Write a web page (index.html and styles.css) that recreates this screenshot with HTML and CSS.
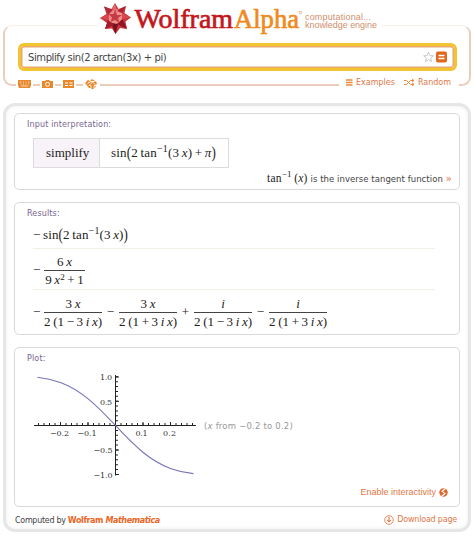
FILE: index.html
```
<!DOCTYPE html>
<html>
<head>
<meta charset="utf-8">
<title>Simplify sin(2 arctan(3x) + pi) - Wolfram|Alpha</title>
<link rel="stylesheet" href="styles.css">
</head>
<body>
<div class="header">
	<a class="logo">
		<svg width="290" height="40" viewBox="0 0 290 40">
			<polygon points="15,2 18.500,8 26,5 24.500,12 31,16.500 25.500,20.500 27,28 20,27 15.500,33 12,27.500 5,28 7,22 0,17 6.500,13 4,5.500 11.500,8" fill="#c8373c" transform="translate(0 1)"/>
			<polygon points="15,8 22,12 22.500,20 16,25 9,21 8,13" fill="#ef8d88"/>
			<polygon points="15,3 17,13 12,9" fill="#e5646a"/>
			<polygon points="26,6 22,13 17,11" fill="#a92331"/>
			<polygon points="31,17.500 22,19 22,13" fill="#d9494f"/>
			<polygon points="27,29 17,24 22.500,19" fill="#8f1524"/>
			<polygon points="15.500,34 11,23 18,24" fill="#79101f"/>
			<polygon points="5,29 8,20 14,25" fill="#a11d2d"/>
			<polygon points="0,18 9,14 9,20" fill="#d94a50"/>
			<polygon points="4,6.500 13,10 8,15" fill="#b22b38"/>
			<polygon points="15,10 17,15 22,15 18,18 19.500,23 15,20 10.500,22 12,17.500 8.500,14 13.500,14" fill="#c63c46"/>
			<text class="wolfram" x="34.500" y="28" textLength="98.500" lengthAdjust="spacingAndGlyphs">Wolfram</text>
			<text class="alpha" x="134" y="28" textLength="65" lengthAdjust="spacingAndGlyphs">Alpha</text>
			<circle cx="200.500" cy="12.500" r="1.300" fill="none" stroke="#e8a070" stroke-width=".8"/>
			<text class="tagline" x="205" y="19.500" textLength="66">computational...</text>
			<text class="tagline" x="205" y="28" textLength="72">knowledge engine</text>
		</svg>
	</a>
	<div class="query">
		<span class="query-text">Simplify sin(2 arctan(3x) + pi)</span>
		<svg width="25" height="12" viewBox="0 0 25 12">
			<path d="M5.500 1.200L6.900 4.600L10.400 4.800L7.700 7.100L8.600 10.600L5.500 8.700L2.400 10.600L3.300 7.100L.6 4.800L4.100 4.600Z" fill="#fff" stroke="#bbb" stroke-width=".8"/>
			<rect x="13" y="0.500" width="11" height="11" rx="2" fill="#e0661a"/>
			<path d="M15.500 4.500h6M15.500 7.500h6" stroke="#fff" stroke-width="1.500"/>
		</svg>
	</div>
	<div class="tools">
		<svg width="13" height="8" viewBox="0 0 13 8"><path d="M0 0h13v5l-1 3h-11l-1-3z" fill="#e9882b"/><path d="M1.500 2h2M5 2h1M7.500 2h1M10 2h1.500M2.500 4h1M5 4h1M7.500 4h1M10 4h1M3 6h7" stroke="#fff" stroke-width=".7"/></svg>
		<svg width="11" height="8" viewBox="0 0 11 8"><path d="M0 1h3l1-1h3l1 1h3v7h-11z" fill="#e9882b"/><circle cx="5.500" cy="4.300" r="2" fill="none" stroke="#fff"/></svg>
		<svg width="11" height="8" viewBox="0 0 11 8"><rect width="11" height="8" fill="#e9882b"/><path d="M2 3h3M6.500 3h3M2 5.500h3M6.500 5.500h3" stroke="#fff" stroke-width="1.200"/></svg>
		<svg width="13" height="11" viewBox="0 0 13 11"><path d="M0 4l3-3l2 1l2-2l3 2l2 2l-2 5h-6z" fill="#e9882b"/><path d="M2.500 4.500l3-2h4" stroke="#fff" fill="none"/><path d="M7.500 3l3.500 3.500h-2v4h-3v-4h-2z" fill="#e9882b" stroke="#fff" stroke-width=".8"/></svg>
	</div>
	<div class="links">
		<svg width="7" height="7" viewBox="0 0 7 7"><path d="M0 1h6.500M0 3.500h6.500M0 6h6.500" stroke="#e9883a" stroke-width="1.300"/></svg>
		<a class="examples">Examples</a>
		<svg width="11" height="7" viewBox="0 0 11 7"><path d="M0 1.500h2.500l4 4h3M0 5.500h2.500l4-4h3M8 0l2 1.500l-2 1.500M8 4l2 1.500l-2 1.500" fill="none" stroke="#e9883a"/></svg>
		<a class="random">Random</a>
	</div>
</div>

<div class="results">
	<div class="pod input">
		<h2>Input interpretation:</h2>
		<div class="cells">
			<div class="cell name">simplify</div>
			<div class="cell expr">sin<span class="paren">(</span>2<s></s>tan<sup>−1</sup>(3<s></s><i>x</i>)<s></s>+<s></s><i>π</i><span class="paren">)</span></div>
		</div>
		<div class="note"><span class="fn">tan<sup>−1</sup><s></s>(<i>x</i>)</span> <span class="note-text">is the inverse tangent function</span> <b>»</b></div>
	</div>

	<div class="pod output">
		<h2>Results:</h2>
		<div class="row first">−<s></s>sin<span class="paren">(</span>2<s></s>tan<sup>−1</sup>(3<s></s><i>x</i>)<span class="paren">)</span></div>
		<div class="row second">
			<span class="op">−</span>
			<span class="frac small"><span>6 <i>x</i></span><span>9 <i>x</i><sup class="pow">2</sup> + 1</span></span>
		</div>
		<div class="row third">
			<span class="op">−</span>
			<span class="frac"><span>3 <i>x</i></span><span>2 (1 − 3 <i>i</i> <i>x</i>)</span></span>
			<span class="op mid">−</span>
			<span class="frac"><span>3 <i>x</i></span><span>2 (1 + 3 <i>i</i> <i>x</i>)</span></span>
			<span class="op mid">+</span>
			<span class="frac"><span><i>i</i></span><span>2 (1 − 3 <i>i</i> <i>x</i>)</span></span>
			<span class="op mid">−</span>
			<span class="frac"><span><i>i</i></span><span>2 (1 + 3 <i>i</i> <i>x</i>)</span></span>
		</div>
	</div>

	<div class="pod plot">
		<h2>Plot:</h2>
		<div class="graph">
			<svg width="170" height="112" viewBox="0 0 170 112">
				<g stroke="#222" fill="none">
					<path d="M4 55.500H166M85.500 5V105.500"/>
					<!-- minor ticks every 0.02 on x, 0.1 on y -->
					<path d="M8 54H164" stroke-width="2" stroke-dasharray="1 4.500"/>
					<path d="M87 6.300V105" stroke-width="2" stroke-dasharray="1 3.880"/>
					<path d="M30.500 52V55M58 52V55M113 52V55M140.500 52V55M86 7H89M86 31.300H89M86 80H89M86 104.500H89"/>
				</g>
				<path transform="translate(85.400 55.400)" d="M-78 -48.200C-70.300 -47.400 -62.700 -45.800 -55 -43C-45.800 -39.600 -36.700 -34.300 -27.500 -26.800C-18.300 -19.300 -9.200 -9.800 0 0C9.200 9.800 18.300 19.300 27.500 26.800C36.700 34.300 45.800 39.600 55 43C62.700 45.800 70.300 47.400 78 48.200" fill="none" stroke="#7774b5" stroke-width="1.100"/>
				<g class="ticks">
					<text x="20" y="66" textLength="19">−0.2</text>
					<text x="47.500" y="66" textLength="19">−0.1</text>
					<text x="105.500" y="66" textLength="12">0.1</text>
					<text x="133" y="66" textLength="13">0.2</text>
					<text x="70" y="10" textLength="12">1.0</text>
					<text x="70" y="34.500" textLength="12">0.5</text>
					<text x="63.500" y="83" textLength="19">−0.5</text>
					<text x="63.500" y="107.500" textLength="19">−1.0</text>
				</g>
			</svg>
			<span class="range">(<i>x</i> from −0.2 to 0.2)</span>
		</div>
		<div class="enable"><a>Enable interactivity</a>
			<svg width="9" height="9" viewBox="0 0 9 9"><circle cx="4.500" cy="4.500" r="4.200" fill="#e0662c"/><path d="M6.500 0.500L3 3.200L6 5.500L2.500 8.500" fill="none" stroke="#fff" stroke-width="1.100"/></svg>
		</div>
	</div>

	<div class="footer">
		<span class="computed">Computed by <b>Wolfram <i>Mathematica</i></b></span>
		<span class="download">
			<svg width="10" height="10" viewBox="0 0 10 10"><circle cx="5" cy="5" r="4.300" fill="none" stroke="#e58a5c"/><path d="M5 2V6.500M3 4.800L5 7L7 4.800" fill="none" stroke="#e0662c"/></svg>
			<a>Download page</a>
		</span>
	</div>
</div>
</body>
</html>
```

FILE: styles.css
```
* {
	box-sizing: border-box;
}
body {
	margin: 0;
	background: #fff;
	font-family: "DejaVu Sans", Verdana, sans-serif;
	color: #444;
}
svg {
	display: block;
	flex: none;
}
a {
	color: #e07848;
}
.header {
	position: relative;
	margin: 25px 3px 0;
	height: 61px;
	padding: 17px 12px 0 13px;
	border: 2px solid #eacdbd;
	border-top: 1px solid #f8efea;
	border-radius: 9px;
}
.logo {
	position: absolute;
	left: 93px;
	top: -26px;
	width: 284px;
	padding-left: 2px;
	background: #fff;
}
.wolfram, .alpha {
	font: 28px "Liberation Serif", serif;
	fill: #c4161c;
	stroke: #c4161c;
	stroke-width: .7px;
}
.alpha {
	fill: #f08a1d;
	stroke: #f08a1d;
}
.tagline {
	font: 9px "Liberation Sans", sans-serif;
	fill: #d18f6c;
}
.query {
	position: relative;
	display: flex;
	align-items: center;
	justify-content: space-between;
	height: 28px;
	padding: 0 6px 0 7px;
	border: 3px solid #f2c42f;
	border-radius: 6px;
	background: #fff;
	box-shadow: inset 0 0 0 1.5px #e9a86c;
}
.query-text {
	font-size: 10px;
	letter-spacing: -.4px;
	white-space: nowrap;
}
.tools {
	position: absolute;
	left: 13px;
	bottom: -6px;
	display: flex;
	align-items: center;
	gap: 10.500px;
	height: 12px;
}
.tools svg {
	outline: 2px solid #fff;
	background: #fff;
}
.links {
	position: absolute;
	right: 10px;
	bottom: -5px;
	display: flex;
	align-items: center;
	height: 14px;
	padding: 0 8px 0 7px;
	background: #fff;
	font-size: 8px;
}
.examples {
	margin: 0 9px 0 3px;
}
.random {
	margin-left: 3px;
}
.results {
	margin: 17px 3px 0;
	height: 429px;
	padding: 7px 8px 0;
	border: 3px solid #e6e6e6;
	border-radius: 12px;
	box-shadow: inset 0 0 4px #eee;
}
.pod {
	margin-bottom: 12px;
	padding: 6px 7px 0 12px;
	border: 1px solid #d9d9d9;
	border-radius: 5px;
	background: #fff;
}
.input {
	height: 77px;
}
.output {
	height: 133px;
}
.plot {
	height: 160px;
	margin-bottom: 0;
}
h2 {
	margin: 0;
	height: 10px;
	font-size: 8px;
	line-height: 10px;
	font-weight: normal;
	letter-spacing: .15px;
	color: #77658f;
}
s {
	display: inline-block;
	width: 2.500px;
}
sup {
	font-size: 10px;
	line-height: 0;
	vertical-align: 5px;
}
.pow {
	font-size: 9px;
	vertical-align: 4px;
}
.cells, .row, .fn {
	font-family: "Liberation Serif", serif;
	color: #222;
	white-space: nowrap;
}
.cells {
	display: flex;
	width: 196px;
	height: 30px;
	margin: 8px 0 0 6px;
	border: 1px solid #dcdcdc;
	font-size: 13px;
	line-height: 28px;
}
.name {
	width: 66px;
	padding-left: 12px;
	border-right: 1px solid #dcdcdc;
	background: #f8f2f9;
}
.expr {
	padding-left: 11px;
	letter-spacing: .2px;
}
.paren {
	display: inline-block;
	line-height: 13px;
	transform: scaleY(1.3);
}
.note {
	display: flex;
	justify-content: flex-end;
	align-items: baseline;
	gap: 3px;
	height: 12px;
	margin-top: 4px;
	font-size: 8.500px;
	line-height: 12px;
	letter-spacing: .05px;
}
.fn {
	font-size: 11.500px;
	letter-spacing: .2px;
}
.fn sup {
	font-size: 9px;
}
.note b {
	font-size: 10px;
	font-weight: normal;
	color: #e07848;
}
.row {
	display: flex;
	align-items: center;
	margin: 0 17px 0 6px;
	border-bottom: 1px solid #f0f0e4;
	font-size: 13px;
}
.first {
	height: 30px;
	display: block;
	line-height: 31px;
	letter-spacing: .15px;
}
.second {
	height: 41px;
	padding-top: 2px;
}
.third {
	height: 43px;
	padding-top: 1px;
	border: 0;
}
.op {
	width: 11px;
}
.mid {
	width: 17px;
	text-align: center;
}
.frac {
	width: 58px;
	text-align: center;
	line-height: 17px;
	word-spacing: -.600px;
}
.frac > span {
	display: block;
}
.frac > span + span {
	border-top: 1px solid #444;
}
.small {
	width: 41px;
}
.graph {
	display: flex;
	align-items: center;
	margin-left: 3px;
	padding-top: 6px;
}
.ticks {
	font: 8px "DejaVu Serif", serif;
	fill: #333;
}
.range {
	margin-left: 4px;
	font-size: 8.500px;
	letter-spacing: .2px;
	color: #999;
}
.enable {
	display: flex;
	justify-content: flex-end;
	align-items: center;
	gap: 3px;
	margin-top: 4px;
	padding-right: 4px;
	font: 9px/12px "Liberation Sans", sans-serif;
}
.footer {
	display: flex;
	justify-content: space-between;
	align-items: center;
	height: 23px;
	padding: 4px 3px 0 1px;
	font-size: 8px;
	letter-spacing: -.3px;
}
.footer b {
	letter-spacing: -.4px;
	color: #ec6424;
}
.download {
	display: flex;
	align-items: center;
	gap: 3px;
	padding-bottom: 2px;
	letter-spacing: -.2px;
}
```
